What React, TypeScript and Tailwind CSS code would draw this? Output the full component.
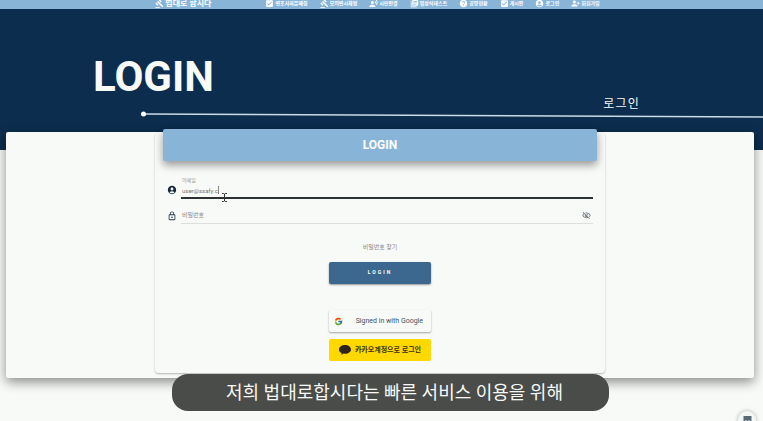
import type { ReactNode } from "react";
import {
  MdAccountCircle,
  MdAssignmentTurnedIn,
  MdCheckBox,
  MdGavel,
  MdHelp,
  MdLibraryBooks,
  MdLockOutline,
  MdOutlineVisibilityOff,
  MdPersonAddAlt1,
  MdRecordVoiceOver,
} from "react-icons/md";
import { FcGoogle } from "react-icons/fc";

const links: { label: string; icon: ReactNode }[] = [
  { label: "변호사자문매칭", icon: <MdAssignmentTurnedIn /> },
  { label: "모의변시체험", icon: <MdGavel /> },
  { label: "시민판결", icon: <MdRecordVoiceOver /> },
  { label: "법상식테스트", icon: <MdLibraryBooks /> },
  { label: "공방현황", icon: <MdHelp /> },
  { label: "게시판", icon: <MdCheckBox /> },
  { label: "로그인", icon: <MdAccountCircle /> },
  { label: "회원가입", icon: <MdPersonAddAlt1 /> },
];

function NavBar() {
  return (
    <header className="flex h-[9px] justify-center bg-[#88b4d8] pr-2 text-white">
      <nav className="flex h-[7px] items-center gap-[54px]">
        <a href="#home" className="flex items-center gap-px text-[8px] leading-[7px] font-bold whitespace-nowrap">
          <MdGavel className="size-[9px]" />
          법대로 합시다
        </a>
        <div className="flex items-center gap-3">
          {links.map((link) => (
            <a
              key={link.label}
              href="#menu"
              className="flex items-center gap-px text-[5px] leading-[7px] font-bold whitespace-nowrap [&>svg]:size-[9px]"
            >
              {link.icon}
              {link.label}
            </a>
          ))}
        </div>
      </nav>
    </header>
  );
}

function Hero() {
  return (
    <section className="bg-[#0c2d4d] pt-[45px] pb-[31px] text-[#f8faf8]">
      <h1 className="ml-[93px] text-[42px] leading-[46px] font-bold">LOGIN</h1>
      <p className="-mt-[3px] mr-[123px] text-right text-[12px] leading-[14px] tracking-widest">로그인</p>
      <svg className="ml-[140px] h-2 w-[calc(100%-140px)]" viewBox="0 0 623 8" preserveAspectRatio="none">
        <path d="M3 3 L623 6" stroke="#c9dce8" strokeWidth="1.6" />
        <circle cx="3.5" cy="3" r="2.5" fill="#fff" />
      </svg>
    </section>
  );
}

function LoginForm() {
  return (
    <form className="w-[450px] rounded-sm bg-[#f8faf8] px-2 pb-3 shadow-[0_1px_2px_rgba(0,0,0,0.28)]">
      <h2 className="-mt-[3px] rounded-xs bg-[#88b4d8] text-center text-[12px] leading-8 font-bold text-white shadow-[0_4px_8px_rgba(0,0,0,0.4)]">
        LOGIN
      </h2>

      <div className="mt-4 flex items-center gap-1 px-1">
        <MdAccountCircle className="mt-1 size-[10px] text-[#16283a]" />
        <div className="relative flex-1 border-b-2 border-[#2c3134] pl-px">
          <label htmlFor="email" className="block text-[5px] leading-[7px] text-[#999]">
            이메일
          </label>
          <input
            id="email"
            type="email"
            defaultValue="user@ssafy.c"
            className="block h-[13px] w-full bg-transparent text-[6px] leading-[13px] text-[#777] outline-none"
          />
          <span className="absolute top-[9px] left-[37px] h-2 w-px bg-[#888]" />
          <svg className="absolute top-4 left-10 h-[9px] w-[7px]" viewBox="0 0 7 9" fill="none" stroke="#333">
            <path d="M1 .5h1.7l.8.6.8-.6H6M3.5 1v7M1 8.5h1.7l.8-.6.8.6H6" />
          </svg>
        </div>
      </div>

      <div className="mt-2 flex items-center gap-1 px-1">
        <MdLockOutline className="size-[10px] text-[#26394a]" />
        <div className="flex flex-1 items-center border-b border-[#dcdfdd] pr-[2px] pl-px">
          <label htmlFor="password" className="text-[6px] leading-4 text-[#888]">
            비밀번호
          </label>
          <input
            id="password"
            type="password"
            className="h-4 min-w-0 flex-1 bg-transparent text-[6px] outline-none"
          />
          <button type="button" aria-label="비밀번호 보기">
            <MdOutlineVisibilityOff className="size-[9px] text-[#657078]" />
          </button>
        </div>
      </div>

      <div className="mx-auto mt-[18px] flex w-[102px] flex-col">
        <a href="#find" className="text-center text-[6px] leading-[10px] text-[#888]">
          비밀번호 찾기
        </a>
        <button
          type="submit"
          className="mt-[10px] h-[22px] rounded-xs bg-[#3c6890] text-[5px] font-bold tracking-[2px] text-white shadow-[0_1px_2px_rgba(0,0,0,0.4)]"
        >
          LOGIN
        </button>
        <button
          type="button"
          className="mt-[26px] flex h-[22px] items-center rounded-xs pr-2 pl-[5px] text-[7px] text-[#46525a] shadow-[0_1px_2px_rgba(0,0,0,0.35)]"
        >
          <FcGoogle className="size-[9px]" />
          <span className="flex-1 text-right whitespace-nowrap">Signed in with Google</span>
        </button>
        <button
          type="button"
          className="mt-[7px] flex h-[22px] items-center justify-center gap-1 rounded-xs bg-[#ffd800] text-[7px] font-bold whitespace-nowrap text-[#3a3115]"
        >
          <svg className="h-[10px] w-3" viewBox="0 0 12 10" fill="#30251b">
            <path d="M6 0C2.7 0 0 1.9 0 4.4 0 6 1.1 7.3 2.7 8L2.2 10 4.6 8.6Q5.3 8.7 6 8.7c3.3 0 6-1.9 6-4.3S9.3 0 6 0Z" />
          </svg>
          카카오계정으로 로그인
        </button>
      </div>
    </form>
  );
}

export default function App() {
  return (
    <div className="relative min-h-screen overflow-hidden bg-[#f8faf8] font-['Roboto','Noto_Sans_CJK_KR',sans-serif]">
      <NavBar />
      <Hero />
      <main className="-mt-[18px] mr-[9px] ml-1.5 flex justify-center rounded-xs bg-[#f8faf8] pb-[5px] shadow-[0_4px_12px_rgba(0,0,0,0.45)]">
        <LoginForm />
      </main>
      <p className="absolute inset-x-0 bottom-[10px] mr-[154px] ml-[172px] rounded-2xl bg-[#4a4c49] pl-2 text-center text-[18px] leading-[37px] whitespace-nowrap text-[#f8faf8]">
        저희 법대로합시다는 빠른 서비스 이용을 위해
      </p>
      <button
        type="button"
        aria-label="채팅"
        className="absolute right-[7px] -bottom-2 flex size-[18px] items-center justify-center rounded-full bg-[#f4f6f5] shadow-[0_0_4px_rgba(0,0,0,0.3)]"
      >
        <svg className="size-[9px]" viewBox="0 0 9 9">
          <path d="M.5 0h8v6L6 8H3L.5 6Z" fill="#586a7a" />
          <path d="M2.5 4.5h1M5.5 4.5h1" stroke="#fff" />
        </svg>
      </button>
    </div>
  );
}
